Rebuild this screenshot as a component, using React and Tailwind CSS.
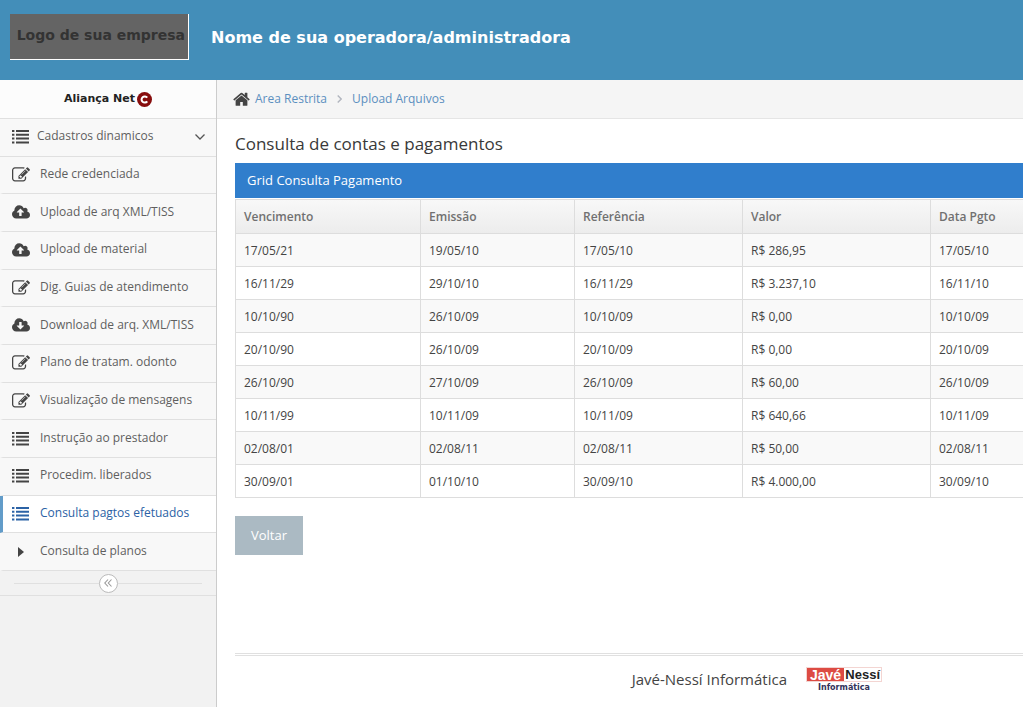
import React from 'react'

const cloudBody = 'm640 224q0 159-112.5 271.5t-271.5 112.5h-1088q-185 0-316.5-131.5t-131.5-316.5q0-130 70-240t188-165q-2-30-2-43 0-212 150-362t362-150q156 0 285.5 87t188.5 231q71-62 166-62 106 0 181 75t75 181q0 76-41 138 130 31 213.5 135.5t83.5 238.5z'

const menu = [
    { icon: 'edit', label: 'Rede credenciada' },
    { icon: 'upload', label: 'Upload de arq XML/TISS' },
    { icon: 'upload', label: 'Upload de material' },
    { icon: 'edit', label: 'Dig. Guias de atendimento' },
    { icon: 'download', label: 'Download de arq. XML/TISS' },
    { icon: 'edit', label: 'Plano de tratam. odonto' },
    { icon: 'edit', label: 'Visualização de mensagens' },
    { icon: 'list', label: 'Instrução ao prestador' },
    { icon: 'list', label: 'Procedim. liberados' },
    { icon: 'list', label: 'Consulta pagtos efetuados', active: true },
    { icon: 'caret', label: 'Consulta de planos' },
]

const payments = [
    ['17/05/21', '19/05/10', '17/05/10', 'R$ 286,95', '17/05/10'],
    ['16/11/29', '29/10/10', '16/11/29', 'R$ 3.237,10', '16/11/10'],
    ['10/10/90', '26/10/09', '10/10/09', 'R$ 0,00', '10/10/09'],
    ['20/10/90', '26/10/09', '20/10/09', 'R$ 0,00', '20/10/09'],
    ['26/10/90', '27/10/09', '26/10/09', 'R$ 60,00', '26/10/09'],
    ['10/11/99', '10/11/09', '10/11/09', 'R$ 640,66', '10/11/09'],
    ['02/08/01', '02/08/11', '02/08/11', 'R$ 50,00', '02/08/11'],
    ['30/09/01', '01/10/10', '30/09/10', 'R$ 4.000,00', '30/09/10'],
]

function Icon({ name }){
    if (name === 'list') {
        return <svg viewBox="0 0 17 14" className="w-[17px] h-[14px]" fill="currentColor" aria-hidden="true">
            {[0, 3.8, 7.6, 11.4].map((y) => <path key={y} d={`M0 ${y}h2.4v2h-2.4zM4 ${y}h13v2h-13z`}/>)}
        </svg>
    }
    if (name === 'edit') {
        return <svg viewBox="0 0 1792 1792" className="w-[18px] h-[18px]" fill="currentColor" aria-hidden="true">
            <path d="M888 1184l116-116-152-152-116 116v56h96v96h56zm440-720q-16-16-33 1l-350 350q-17 17-1 33t33-1l350-350q17-17 1-33zm80 594v190q0 119-84.5 203.5t-203.5 84.5h-832q-119 0-203.5-84.5t-84.5-203.5v-832q0-119 84.5-203.5t203.5-84.5h832q63 0 117 25 15 7 18 23 3 17-9 29l-49 49q-14 14-32 8-23-6-45-6h-832q-66 0-113 47t-47 113v832q0 66 47 113t113 47h832q66 0 113-47t47-113v-126q0-13 9-22l64-64q15-15 35-7t20 29zm-96-738l288 288-672 672h-288v-288zm444 132l-92 92-288-288 92-92q28-28 68-28t68 28l152 152q28 28 28 68t-28 68z"/>
        </svg>
    }
    if (name === 'caret') {
        return <svg viewBox="0 0 6 10" className="w-[6px] h-[10px]" fill="currentColor" aria-hidden="true">
            <path d="M0 0l6 5-6 5z"/>
        </svg>
    }
    const arrow = name === 'upload'
        ? 'M1280 864q0-14-9-23l-352-352q-9-9-23-9t-23 9l-351 351q-10 12-10 24 0 14 9 23t23 9h224v352q0 13 9.5 22.5t22.5 9.5h192q13 0 22.5-9.5t9.5-22.5v-352h224q13 0 22.5-9.5t9.5-22.5z'
        : 'M1280 928q0-14-9-23t-23-9h-224v-352q0-13-9.5-22.5t-22.5-9.5h-192q-13 0-22.5 9.5t-9.5 22.5v352h-224q-13 0-22.5 9.5t-9.5 22.5q0 14 9 23l352 352q9 9 23 9t23-9l351-351q10-12 10-24z'
    return <svg viewBox="0 0 1920 1792" className="w-[18px] h-[17px]" fill="currentColor" fillRule="evenodd" aria-hidden="true">
        <path d={arrow + 'M1280 928' + cloudBody}/>
    </svg>
}

function MenuItem({ icon, label, active }){
    return (
        <li className={active
            ? 'border-b border-[#e0e0e0] border-l-3 border-l-[#629cc9] bg-white text-[#2b62a5]'
            : 'border-b border-[#e0e0e0] border-l-3 border-l-[#f8f8f8] bg-[#f8f8f8] text-[#5f5f5f]'}>
            <a href="#" className="flex h-full items-center">
                <span className={active ? 'flex w-[37px] justify-center pr-0.5' : 'flex w-[37px] justify-center pr-0.5 text-[#444]'}><Icon name={icon}/></span>
                <span className="pb-0.5">{label}</span>
            </a>
        </li>
    )
}

function Sidebar(){
    return (
        <aside className="w-[217px] shrink-0 border-r border-[#ccc] bg-[#f2f2f2] text-[12px]">
            <div className="flex h-[39px] items-center justify-center gap-0.5 border-b border-[#e0e0e0] bg-[#fcfcfc] font-['DejaVu_Sans',sans-serif] text-[11px] font-bold text-[#222]">
                Aliança Net
                <svg viewBox="0 0 15 15" className="w-[15px] h-[15px]" aria-hidden="true">
                    <circle cx="7.5" cy="7.5" r="7.5" fill="#870d0d"/>
                    <path d="M10.2 5.7a3.1 3.1 0 1 0 0 3.6" fill="none" stroke="#fff" strokeWidth="2"/>
                </svg>
            </div>
            <nav>
                <ul className="grid h-[452px] auto-rows-fr">
                    <li className="border-b border-[#e0e0e0] bg-[#f8f8f8] text-[#5f5f5f]">
                        <button type="button" className="flex h-full w-full items-center gap-2 pl-3 pr-[11px]">
                            <span className="text-[#444]"><Icon name="list"/></span>
                            <span className="grow pb-0.5 text-left">Cadastros dinamicos</span>
                            <svg viewBox="0 0 10 6" className="w-[10px] h-[6px]" fill="none" stroke="#555" strokeWidth="1.3" aria-hidden="true">
                                <path d="M.5.5L5 5 9.5.5"/>
                            </svg>
                        </button>
                    </li>
                    {menu.map((item) => <MenuItem key={item.label} {...item}/>)}
                </ul>
            </nav>
            <div className="flex h-[25px] items-center border-b border-[#e0e0e0] px-3.5">
                <span className="h-px grow bg-[#e0e0e0]"></span>
                <button type="button" aria-label="Recolher menu" className="flex h-[19px] w-[19px] items-center justify-center rounded-full border border-[#bbb] bg-white">
                    <svg viewBox="0 0 8 8" className="w-[8px] h-[8px]" fill="none" stroke="#999" strokeWidth="1.1" aria-hidden="true">
                        <path d="M4 .5L.8 4 4 7.5M7.5.5L4.3 4l3.2 3.5"/>
                    </svg>
                </button>
                <span className="h-px grow bg-[#e0e0e0]"></span>
            </div>
        </aside>
    )
}

function Breadcrumb(){
    return (
        <nav className="flex h-[39px] items-center border-b border-[#e5e5e5] bg-[#f5f5f5] pl-4 text-[12px] text-[#5b8fbf]">
            <svg viewBox="64 192 1664 1344" className="mr-[5px] w-[17px] h-[14px]" fill="#444" aria-hidden="true">
                <path d="M1472 992v480q0 26-19 45t-45 19h-384v-384h-256v384h-384q-26 0-45-19t-19-45v-480q0-1 .5-3t.5-3l575-474 575 474q1 2 1 6zm223-69l-62 74q-8 9-21 11h-3q-13 0-21-7l-692-577-692 577q-12 8-24 7-13-2-21-11l-62-74q-8-10-7-23.5t11-21.5l719-599q32-26 76-26t76 26l244 204v-195q0-14 9-23t23-9h192q14 0 23 9t9 23v408l219 182q10 8 11 21.5t-7 23.5z"/>
            </svg>
            <a href="#">Area Restrita</a>
            <svg viewBox="0 0 5 8" className="mx-2.5 w-[5px] h-[8px]" fill="none" stroke="#b2b6bf" strokeWidth="1.4" aria-hidden="true">
                <path d="M.7.5L4.2 4 .7 7.5"/>
            </svg>
            <a href="#">Upload Arquivos</a>
        </nav>
    )
}

function PaymentGrid(){
    const cell = 'border border-[#ddd] px-2 last:border-r-0'
    return (
        <table className="w-full table-fixed border-collapse text-left text-[12px] text-[#444]">
            <colgroup>
                <col className="w-[185px]"/>
                <col className="w-[154px]"/>
                <col className="w-[168px]"/>
                <col className="w-[188px]"/>
                <col/>
            </colgroup>
            <thead>
                <tr className="h-[34px] bg-linear-to-b from-[#f8f8f8] to-[#ececec] text-[#707070]">
                    {['Vencimento', 'Emissão', 'Referência', 'Valor', 'Data Pgto'].map((title) =>
                        <th key={title} scope="col" className={cell + ' font-semibold'}>{title}</th>)}
                </tr>
            </thead>
            <tbody>
                {payments.map((row) =>
                    <tr key={row[0]} className="h-[33px] odd:bg-[#f9f9f9]">
                        {row.map((value, i) => <td key={i} className={cell + ' pt-0.5'}>{value}</td>)}
                    </tr>)}
            </tbody>
        </table>
    )
}

function JaveLogo(){
    return (
        <div className="w-[76px] font-['Liberation_Sans',sans-serif]">
            <div className="flex h-[15px] items-center justify-between border border-[#f3d5d2] pr-px font-bold leading-3">
                <span className="flex h-full items-center bg-[#dd4b43] px-[3px] text-[14px] text-white">Javé</span>
                <span className="text-[13px] text-[#222]">Nessí</span>
            </div>
            <div className="mt-0.5 text-center font-['DejaVu_Sans',sans-serif] text-[8px] font-bold leading-2 text-[#33335a]">Informática</div>
        </div>
    )
}

export default function App(){
    return (
        <div className="flex min-h-screen flex-col overflow-x-hidden bg-white font-['Open_Sans',sans-serif]">
            <header className="flex h-20 shrink-0 items-center bg-[#438eb9] pb-1.5 pl-2.5 font-['DejaVu_Sans',sans-serif] font-bold">
                <div className="flex h-[46px] w-[179px] shrink-0 items-center justify-end whitespace-nowrap border-r border-b border-white bg-[#646464] pr-[3px] pb-0.5 text-[14px] text-[#333]">
                    Logo de sua empresa
                </div>
                <h1 className="ml-[22px] whitespace-nowrap pt-0.5 text-[16px] text-white">Nome de sua operadora/administradora</h1>
            </header>
            <div className="flex grow">
                <Sidebar/>
                <div className="flex min-w-0 grow flex-col">
                    <Breadcrumb/>
                    <main className="pl-[18px] pt-[11px]">
                        <h2 className="text-[17px] leading-7 text-[#393939]">Consulta de contas e pagamentos</h2>
                        <div className="mt-[5px] mb-px h-[35px] bg-[#307ecc] pl-3 text-[13px] leading-[35px] text-white">Grid Consulta Pagamento</div>
                        <PaymentGrid/>
                        <button type="button" className="mt-[18px] h-[39px] bg-[#abbac3] px-4 text-[13px] text-white">Voltar</button>
                    </main>
                    <footer className="mt-auto ml-[18px] flex h-[54px] items-center justify-end gap-[19px] border-t-3 border-double border-[#e0e0e0] pb-1 pr-[141px] text-[15px] text-[#444]">
                        <span>Javé-Nessí Informática</span>
                        <JaveLogo/>
                    </footer>
                </div>
            </div>
        </div>
    )
}
